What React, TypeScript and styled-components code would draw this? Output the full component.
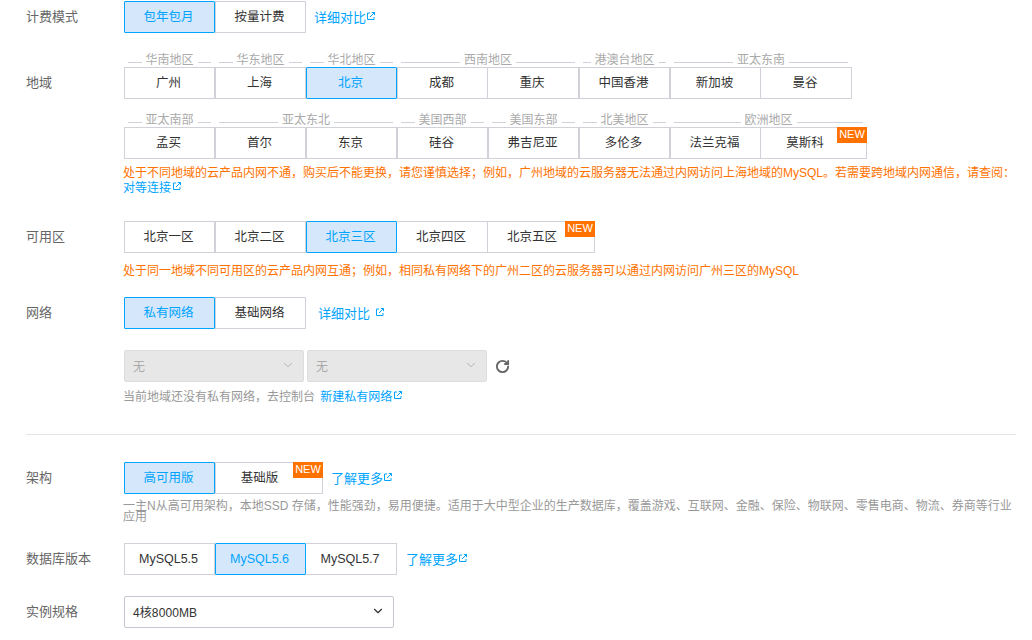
import React from 'react';
import styled, { createGlobalStyle } from 'styled-components';
import { ChevronDown, RotateCw } from 'lucide-react';

const regionRows = [
  [
    { name: '华南地区', cities: ['广州'] },
    { name: '华东地区', cities: ['上海'] },
    { name: '华北地区', cities: ['北京'] },
    { name: '西南地区', cities: ['成都', '重庆'] },
    { name: '港澳台地区', cities: ['中国香港'] },
    { name: '亚太东南', cities: ['新加坡', '曼谷'] }
  ],
  [
    { name: '亚太南部', cities: ['孟买'] },
    { name: '亚太东北', cities: ['首尔', '东京'] },
    { name: '美国西部', cities: ['硅谷'] },
    { name: '美国东部', cities: ['弗吉尼亚'] },
    { name: '北美地区', cities: ['多伦多'] },
    { name: '欧洲地区', cities: ['法兰克福', '莫斯科'] }
  ]
];

const LinkIcon = ({ gap = 2 }: { gap?: number }) => (
  <LinkSvg viewBox="0 0 8 8" width="8" height="8" $gap={gap}>
    <path d="M3 1H.5v6.5H7V5" fill="none" stroke="currentColor" strokeWidth="1" />
    <path d="M3 5 7.5.5M4.8.5h2.7v2.7" fill="none" stroke="currentColor" strokeWidth="1" />
  </LinkSvg>
);

export default function App() {
  return (
    <Page>
      <GlobalStyle />

      <Row>
        <Label>计费模式</Label>
        <Content>
          <Options>
            <Option $active>包年包月</Option>
            <Option $double>按量计费</Option>
            <MoreLink $gap={8}>详细对比<LinkIcon gap={1} /></MoreLink>
          </Options>
        </Content>
      </Row>

      <Row $top={19}>
        <Label $offset={15}>地域</Label>
        <Content>
          {regionRows.map((groups, rowIndex) => (
            <RegionRow key={rowIndex} $top={rowIndex === 0 ? 0 : 13}>
              {groups.map((group, groupIndex) => (
                <RegionGroup key={group.name}>
                  <RegionTitle>
                    <TitleLine />
                    <span>{group.name}</span>
                    <TitleLine />
                  </RegionTitle>
                  <Options>
                    {group.cities.map((city) => (
                      <Option
                        key={city}
                        $active={city === '北京'}
                        $double={groupIndex === 1}
                        $first={groupIndex === 0}
                        $extra={city === '莫斯科' ? 15 : 0}
                      >
                        {city}
                        {city === '莫斯科' && <NewBadge>NEW</NewBadge>}
                      </Option>
                    ))}
                  </Options>
                </RegionGroup>
              ))}
            </RegionRow>
          ))}
          <WarnHint $top={7}>
            处于不同地域的云产品内网不通，购买后不能更换，请您谨慎选择；例如，广州地域的云服务器无法通过内网访问上海地域的MySQL。若需要跨地域内网通信，请查阅：
            <HintLink $block>对等连接<LinkIcon /></HintLink>
          </WarnHint>
        </Content>
      </Row>

      <Row $top={25}>
        <Label>可用区</Label>
        <Content>
          <Options>
            <Option>北京一区</Option>
            <Option $double>北京二区</Option>
            <Option $active>北京三区</Option>
            <Option>北京四区</Option>
            <Option $extra={16}>北京五区<NewBadge>NEW</NewBadge></Option>
          </Options>
          <WarnHint $top={11}>
            处于同一地域不同可用区的云产品内网互通；例如，相同私有网络下的广州二区的云服务器可以通过内网访问广州三区的MySQL
          </WarnHint>
        </Content>
      </Row>

      <Row $top={18}>
        <Label>网络</Label>
        <Content>
          <Options>
            <Option $active>私有网络</Option>
            <Option $double>基础网络</Option>
            <MoreLink $gap={12}>详细对比<LinkIcon gap={6} /></MoreLink>
          </Options>
          <SelectRow>
            <SelectBox $width={180} $disabled>
              无<ChevronDown size={14} strokeWidth={1.5} />
            </SelectBox>
            <SelectBox $width={180} $disabled>
              无<ChevronDown size={14} strokeWidth={1.5} />
            </SelectBox>
            <RefreshIcon size={15} strokeWidth={3} />
          </SelectRow>
          <GreyHint $top={8}>
            当前地域还没有私有网络，去控制台 <HintLink $gap={2}>新建私有网络<LinkIcon /></HintLink>
          </GreyHint>
        </Content>
      </Row>

      <Divider />

      <Row>
        <Label>架构</Label>
        <Content>
          <Options>
            <Option $active>高可用版</Option>
            <Option $double $extra={17}>基础版<NewBadge>NEW</NewBadge></Option>
            <MoreLink $gap={8}>了解更多<LinkIcon gap={1} /></MoreLink>
          </Options>
          <TightHint>
            一主N从高可用架构，本地SSD 存储，性能强劲，易用便捷。适用于大中型企业的生产数据库，覆盖游戏、互联网、金融、保险、物联网、零售电商、物流、券商等行业应用
          </TightHint>
        </Content>
      </Row>

      <Row $top={20}>
        <Label>数据库版本</Label>
        <Content>
          <Options>
            <Option>MySQL5.5</Option>
            <Option $active>MySQL5.6</Option>
            <Option>MySQL5.7</Option>
            <MoreLink $gap={9}>了解更多<LinkIcon gap={1} /></MoreLink>
          </Options>
        </Content>
      </Row>

      <Row $top={21}>
        <Label>实例规格</Label>
        <Content>
          <SelectBox $width={270}>
            4核8000MB<ChevronDown size={14} strokeWidth={2} />
          </SelectBox>
        </Content>
      </Row>
    </Page>
  );
}

const GlobalStyle = createGlobalStyle`
  html, body {
    margin: 0;
    background: #fff;
  }
  body {
    font-family: "Liberation Sans", "Noto Sans CJK SC", sans-serif;
    font-size: 12px;
    color: #333;
  }
`;

const Page = styled.div`
  width: 1032px;
  height: 640px;
  box-sizing: border-box;
  padding: 1px 16px 0 26px;
  overflow: hidden;
`;

const Row = styled.div<{ $top?: number }>`
  display: flex;
  margin-top: ${({ $top }) => $top ?? 0}px;
`;

const Label = styled.div<{ $offset?: number }>`
  flex: 0 0 98px;
  height: 32px;
  margin-top: ${({ $offset }) => $offset ?? 0}px;
  line-height: 32px;
  font-size: 13px;
  color: #666;
`;

const Content = styled.div`
  flex: 1;
  min-width: 0;
`;

const Options = styled.div`
  display: flex;
  align-items: stretch;
`;

const Option = styled.div<{ $active?: boolean; $double?: boolean; $first?: boolean; $extra?: number }>`
  position: relative;
  box-sizing: border-box;
  width: ${({ $extra }) => 91 + ($extra ?? 0)}px;
  height: 32px;
  padding-right: ${({ $extra }) => 2 + ($extra ?? 0)}px;
  border: 1px solid ${({ $active }) => ($active ? '#00a4ff' : '#d1d2d9')};
  border-left-width: ${({ $active, $double, $first }) => ($active || $double || $first ? '1px' : '0')};
  border-radius: ${({ $active }) => ($active ? '1px' : '0')};
  background: ${({ $active }) => ($active ? '#d5e7fa' : '#fff')};
  color: ${({ $active }) => ($active ? '#00a4ff' : '#333')};
  font-size: 12.5px;
  line-height: 30px;
  text-align: center;
  &:first-child {
    border-left-width: 1px;
  }
`;

const NewBadge = styled.span`
  position: absolute;
  top: -1px;
  right: -1px;
  width: 30px;
  height: 16px;
  background: #ff7200;
  color: #fff;
  font-size: 11px;
  line-height: 15px;
  text-align: center;
`;

const MoreLink = styled.a<{ $gap?: number }>`
  align-self: center;
  margin-top: -2px;
  margin-left: ${({ $gap }) => $gap ?? 9}px;
  color: #00a4ff;
  font-size: 13px;
`;

const LinkSvg = styled.svg<{ $gap: number }>`
  margin-left: ${({ $gap }) => $gap}px;
  vertical-align: 2px;
  color: #00a4ff;
`;

const RegionRow = styled.div<{ $top: number }>`
  display: flex;
  margin-top: ${({ $top }) => $top}px;
`;

const RegionGroup = styled.div`
  display: flex;
  flex-direction: column;
`;

const RegionTitle = styled.div`
  display: flex;
  align-items: center;
  gap: 4px;
  height: 16px;
  margin: 0 4px -1px;
  color: #aaa;
  font-size: 12px;
  line-height: 16px;
  white-space: nowrap;
`;

const TitleLine = styled.i`
  flex: 1;
  height: 1px;
  margin-top: 4px;
  background: #d1d2d9;
`;

const WarnHint = styled.div<{ $top?: number }>`
  margin: ${({ $top }) => $top ?? 6}px -8px 0 -1px;
  color: #ff7200;
  font-size: 12px;
  line-height: 15px;
`;

const GreyHint = styled.div<{ $top?: number }>`
  margin: ${({ $top }) => $top ?? 6}px 0 0 -1px;
  color: #999;
  font-size: 12px;
  line-height: 15px;
`;

const TightHint = styled(GreyHint)`
  margin-top: 7px;
  line-height: 11px;
`;

const HintLink = styled.a<{ $block?: boolean; $gap?: number }>`
  display: ${({ $block }) => ($block ? 'block' : 'inline')};
  margin-left: ${({ $gap }) => $gap ?? 0}px;
  color: #00a4ff;
`;

const SelectRow = styled.div`
  display: flex;
  align-items: center;
  gap: 3px;
  margin-top: 21px;
`;

const SelectBox = styled.div<{ $width: number; $disabled?: boolean }>`
  display: flex;
  align-items: center;
  justify-content: space-between;
  box-sizing: border-box;
  width: ${({ $width }) => $width}px;
  height: 32px;
  padding: 0 8px 2px;
  border: 1px solid ${({ $disabled }) => ($disabled ? '#ddd' : '#c4c6cf')};
  border-radius: 2px;
  background: ${({ $disabled }) => ($disabled ? '#e7e7e7' : '#fff')};
  color: ${({ $disabled }) => ($disabled ? '#aaa' : '#333')};
  font-size: 12px;
  letter-spacing: 0.1px;
`;

const RefreshIcon = styled(RotateCw)`
  margin-left: 5px;
  color: #666;
`;

const Divider = styled.div`
  height: 1px;
  margin: 29px 0 27px;
  background: #e5e5e5;
`;
